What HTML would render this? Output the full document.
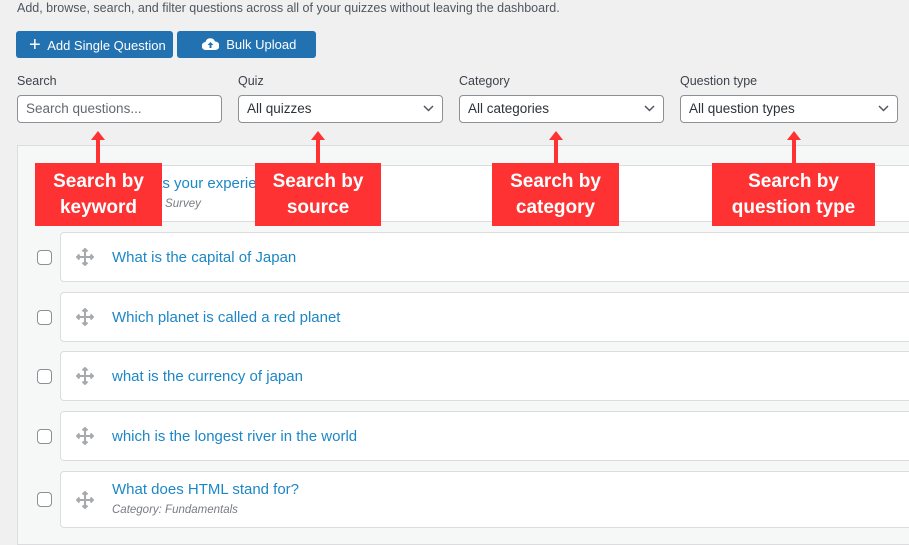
<!DOCTYPE html>
<html><head><style>
*{box-sizing:border-box;margin:0;padding:0}
body{width:909px;height:530px;overflow:hidden;background:#f0f0f1;font-family:"Liberation Sans",sans-serif;position:relative;color:#3c434a}
.abs{position:absolute}
.desc{left:17px;top:1px;font-size:12.5px;color:#50575e}
.btn{top:31px;height:27px;background:#2271b1;border-radius:3px;color:#fff;font-size:13px;line-height:27px}
.lbl{top:74px;font-size:12.5px;color:#3c434a}
.inp{top:95px;height:28px;background:#fff;border:1px solid #8c8f94;border-radius:4px;font-size:13.5px;line-height:26px;padding-left:8px;color:#2c3338}
.inp svg{position:absolute;right:8px;top:9px}
.panel{left:17px;top:145px;width:900px;height:400px;background:#f6f7f7;border:1px solid #dcdcde}
.row{left:60px;width:860px;background:#fff;border:1px solid #dcdcde;border-radius:4px}
.q{position:absolute;left:51px;font-size:15px;color:#1d87c6}
.cat{position:absolute;left:51px;font-size:11.5px;color:#787c82;font-style:italic}
.cb{left:37px;width:15px;height:15px;border:1px solid #8c8f94;border-radius:4px;background:#fff}
.mv{position:absolute;left:15px}
.tag{top:163px;height:63px;background:#fe3233;color:#fff;font-weight:bold;font-size:19px;line-height:26px;text-align:center;padding-top:6px}
.ar{width:4px;background:#fe3233}
.ah{width:0;height:0;border-left:7px solid transparent;border-right:7px solid transparent;border-bottom:9px solid #fe3233}
</style></head><body>
<div class="abs desc">Add, browse, search, and filter questions across all of your quizzes without leaving the dashboard.</div>
<div class="abs btn" style="left:16px;width:157px;padding-left:13px"><span style="font-size:20px;position:relative;top:1px">+</span>&nbsp; Add Single Question</div>
<div class="abs btn" style="left:177px;width:139px;padding-left:25px"><svg width="17" height="12" viewBox="0 0 17 12" style="vertical-align:-1px"><path d="M4 12a4 4 0 0 1-.5-8A5 5 0 0 1 13 3.5 4 4 0 0 1 13.5 12z" fill="#fff"/><path d="M8.5 4l-3 3h2v3h2V7h2z" fill="#2271b1"/></svg>&nbsp; Bulk Upload</div>

<div class="abs lbl" style="left:17px">Search</div>
<div class="abs lbl" style="left:238px">Quiz</div>
<div class="abs lbl" style="left:459px">Category</div>
<div class="abs lbl" style="left:680px">Question type</div>
<div class="abs inp" style="left:17px;width:205px;color:#646970">Search questions...</div>
<div class="abs inp" style="left:238px;width:205px">All quizzes<svg width="11" height="7"><path d="M1 1l4.5 4.5L10 1" stroke="#50575e" stroke-width="1.5" fill="none"/></svg></div>
<div class="abs inp" style="left:459px;width:205px">All categories<svg width="11" height="7"><path d="M1 1l4.5 4.5L10 1" stroke="#50575e" stroke-width="1.5" fill="none"/></svg></div>
<div class="abs inp" style="left:680px;width:218px">All question types<svg width="11" height="7"><path d="M1 1l4.5 4.5L10 1" stroke="#50575e" stroke-width="1.5" fill="none"/></svg></div>

<div class="abs panel"></div>

<div class="abs row" style="top:165px;height:57px"><div class="q" style="top:9px;left:48px">How was your experience</div><div class="cat" style="top:32px">Category: Survey</div></div>

<div class="abs row" style="top:232px;height:50px"><svg class="mv" style="top:15px" width="18" height="18" viewBox="0 0 18 18"><path d="M9 1v16M1 9h16M6.5 3.5L9 1l2.5 2.5M6.5 14.5L9 17l2.5-2.5M3.5 6.5L1 9l2.5 2.5M14.5 6.5L17 9l-2.5 2.5" stroke="#a7aaad" stroke-width="2" fill="none"/></svg><div class="q" style="top:16px">What is the capital of Japan</div></div>
<div class="abs cb" style="top:250px"></div>
<div class="abs row" style="top:292px;height:50px"><svg class="mv" style="top:15px" width="18" height="18" viewBox="0 0 18 18"><path d="M9 1v16M1 9h16M6.5 3.5L9 1l2.5 2.5M6.5 14.5L9 17l2.5-2.5M3.5 6.5L1 9l2.5 2.5M14.5 6.5L17 9l-2.5 2.5" stroke="#a7aaad" stroke-width="2" fill="none"/></svg><div class="q" style="top:16px">Which planet is called a red planet</div></div>
<div class="abs cb" style="top:310px"></div>
<div class="abs row" style="top:351px;height:50px"><svg class="mv" style="top:15px" width="18" height="18" viewBox="0 0 18 18"><path d="M9 1v16M1 9h16M6.5 3.5L9 1l2.5 2.5M6.5 14.5L9 17l2.5-2.5M3.5 6.5L1 9l2.5 2.5M14.5 6.5L17 9l-2.5 2.5" stroke="#a7aaad" stroke-width="2" fill="none"/></svg><div class="q" style="top:16px">what is the currency of japan</div></div>
<div class="abs cb" style="top:369px"></div>
<div class="abs row" style="top:411px;height:50px"><svg class="mv" style="top:15px" width="18" height="18" viewBox="0 0 18 18"><path d="M9 1v16M1 9h16M6.5 3.5L9 1l2.5 2.5M6.5 14.5L9 17l2.5-2.5M3.5 6.5L1 9l2.5 2.5M14.5 6.5L17 9l-2.5 2.5" stroke="#a7aaad" stroke-width="2" fill="none"/></svg><div class="q" style="top:16px">which is the longest river in the world</div></div>
<div class="abs cb" style="top:429px"></div>
<div class="abs row" style="top:471px;height:57px"><svg class="mv" style="top:19px" width="18" height="18" viewBox="0 0 18 18"><path d="M9 1v16M1 9h16M6.5 3.5L9 1l2.5 2.5M6.5 14.5L9 17l2.5-2.5M3.5 6.5L1 9l2.5 2.5M14.5 6.5L17 9l-2.5 2.5" stroke="#a7aaad" stroke-width="2" fill="none"/></svg><div class="q" style="top:9px">What does HTML stand for?</div><div class="cat" style="top:32px">Category: Fundamentals</div></div>
<div class="abs cb" style="top:492px"></div>

<div class="abs ah" style="left:91px;top:131px"></div><div class="abs ar" style="left:96px;top:139px;height:25px"></div>
<div class="abs tag" style="left:35px;width:127px">Search by<br>keyword</div>
<div class="abs ah" style="left:311px;top:131px"></div><div class="abs ar" style="left:316px;top:139px;height:25px"></div>
<div class="abs tag" style="left:255px;width:126px">Search by<br>source</div>
<div class="abs ah" style="left:549px;top:131px"></div><div class="abs ar" style="left:554px;top:139px;height:25px"></div>
<div class="abs tag" style="left:492px;width:127px">Search by<br>category</div>
<div class="abs ah" style="left:787px;top:131px"></div><div class="abs ar" style="left:792px;top:139px;height:25px"></div>
<div class="abs tag" style="left:712px;width:163px">Search by<br>question type</div>
</body></html>
